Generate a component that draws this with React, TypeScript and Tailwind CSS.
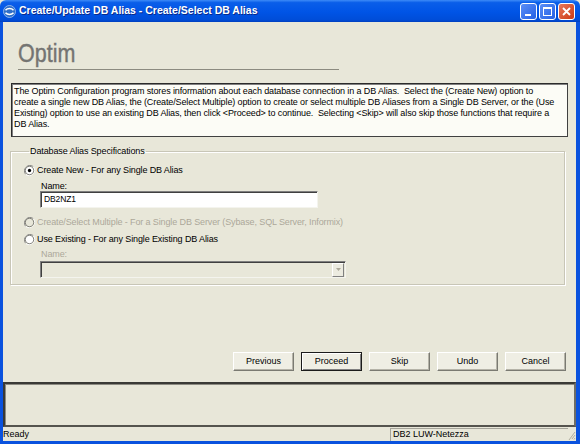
import React from "react";

const font = { fontFamily: '"Liberation Sans", Arial, sans-serif' };

function Radio({ checked, disabled }: { checked?: boolean; disabled?: boolean }) {
  return (
    <svg width="11" height="11" viewBox="0 0 12 12" className="shrink-0">
      <path d="M10.2 1.8 A6 6 0 0 0 1.8 10.2" fill="none" stroke="#808080" strokeWidth="1" />
      <path d="M1.8 10.2 A6 6 0 0 0 10.2 1.8" fill="none" stroke="#ffffff" strokeWidth="1" />
      <circle cx="6" cy="6" r="4.6" fill={disabled ? "#e8e7d9" : "#ffffff"} stroke="#5a5a55" strokeWidth="0.8" />
      {checked && <circle cx="6" cy="6" r="1.8" fill="#000" />}
    </svg>
  );
}

function Btn({ label, def }: { label: string; def?: boolean }) {
  return (
    <div
      className={
        "w-[61px] h-[19px] flex items-center justify-center text-[9px] text-black bg-[#efeee4] " +
        (def
          ? "border border-[#1b1b1b] shadow-[inset_1px_1px_0_#fff,inset_-1px_-1px_0_#808080]"
          : "border border-t-[#fff] border-l-[#fff] border-r-[#7a7a72] border-b-[#7a7a72] shadow-[inset_-1px_-1px_0_#b5b3a8]")
      }
    >
      {label}
    </div>
  );
}

export default function App() {
  return (
    <div className="w-[580px] h-[444px] flex flex-col overflow-hidden bg-[#e8e7d9]" style={font}>
      {/* Title bar */}
      <div className="h-[22px] shrink-0 flex items-center bg-[linear-gradient(#3d8bf7_0%,#0a5ee9_12%,#0054e6_55%,#004dd8_90%,#003fbf_100%)] rounded-t-[6px]">
        <svg width="13" height="13" viewBox="0 0 13 13" className="ml-[3px]">
          <circle cx="6.5" cy="6.5" r="6" fill="#2f6fc9" stroke="#a9c8f0" strokeWidth="0.8" />
          <path d="M2.5 5.2 C4.5 3 8.5 3 10.5 5.2" fill="none" stroke="#fff" strokeWidth="1.6" />
          <path d="M2.5 7.8 C4.5 10 8.5 10 10.5 7.8" fill="none" stroke="#fff" strokeWidth="1.6" />
        </svg>
        <span className="ml-[3px] text-white font-bold text-[10.5px] [text-shadow:1px_1px_0_#0a2a8a] whitespace-nowrap">
          Create/Update DB Alias - Create/Select DB Alias
        </span>
        <div className="ml-auto mr-[5px] flex gap-[2px]">
          <div className="w-[17px] h-[17px] rounded-[3px] border border-white bg-[linear-gradient(135deg,#5b8ef6,#2460e5)] flex items-end pl-[4px] pb-[3px]">
            <div className="w-[6px] h-[2px] bg-white" />
          </div>
          <div className="w-[17px] h-[17px] rounded-[3px] border border-white bg-[linear-gradient(135deg,#5b8ef6,#2460e5)] flex items-center justify-center">
            <div className="w-[9px] h-[9px] border border-white border-t-[2px]" />
          </div>
          <div className="w-[17px] h-[17px] rounded-[3px] border border-white bg-[linear-gradient(135deg,#e8785a,#cc3a15)] flex items-center justify-center">
            <svg width="9" height="9" viewBox="0 0 9 9">
              <path d="M1 1 L8 8 M8 1 L1 8" stroke="#fff" strokeWidth="1.8" />
            </svg>
          </div>
        </div>
      </div>

      {/* Body */}
      <div className="flex-1 flex flex-col border-l-[3px] border-r-[4px] border-b-[3px] border-[#0a52de]">
        {/* Header */}
        <div className="ml-[15px] w-[321px] h-[48px] shrink-0 border-b border-[#8c8b80] flex items-end pb-[3px]">
          <span className="text-[25px] leading-none text-[#747472] scale-x-[0.86] origin-left [-webkit-text-stroke:0.4px_#747472]">Optim</span>
        </div>

        {/* Description */}
        <div className="mt-[13px] mx-[8px] h-[54px] shrink-0 bg-[#fcfcf6] border border-[#2b2b2b] border-r-[#404040] border-b-[#404040] shadow-[inset_1px_1px_0_#808080] pl-[2px] pt-[2px] text-[9px] leading-[11px] tracking-[-0.12px] text-black whitespace-nowrap overflow-hidden">
          <div>The Optim Configuration program stores information about each database connection in a DB Alias.&nbsp; Select the (Create New) option to</div>
          <div>create a single new DB Alias, the (Create/Select Multiple) option to create or select multiple DB Aliases from a Single DB Server, or the (Use</div>
          <div>Existing) option to use an existing DB Alias, then click &lt;Proceed&gt; to continue.&nbsp; Selecting &lt;Skip&gt; will also skip those functions that require a</div>
          <div>DB Alias.</div>
        </div>

        {/* Group box */}
        <fieldset className="mt-[9px] ml-[7px] mr-[11px] border border-[#c8c6b7] shadow-[inset_1px_1px_0_#fff,1px_1px_0_#fff] px-[13px] pb-[6px] text-[9px] tracking-[-0.12px] text-black">
          <legend className="ml-[5px] px-[1px] leading-[11px]">Database Alias Specifications</legend>
          <div className="mt-[7px] h-[13px] flex items-center gap-[2px]">
            <Radio checked />
            <span className="leading-[13px]">Create New - For any Single DB Alias</span>
          </div>
          <div className="mt-[4px] ml-[17px] h-[10px] leading-[11px]">Name:</div>
          <div className="ml-[16px] w-[278px] h-[17px] bg-white border border-[#7f7f7f] border-r-[#f4f4ee] border-b-[#f4f4ee] shadow-[inset_1px_1px_0_#404040] flex items-center pl-[3px] text-[8.5px]">
            DB2NZ1
          </div>
          <div className="mt-[8px] h-[13px] flex items-center gap-[2px] text-[#aca899]">
            <Radio disabled />
            <span className="leading-[13px]">Create/Select Multiple - For a Single DB Server (Sybase, SQL Server, Informix)</span>
          </div>
          <div className="mt-[4px] h-[13px] flex items-center gap-[2px]">
            <Radio />
            <span className="leading-[13px]">Use Existing - For any Single Existing DB Alias</span>
          </div>
          <div className="mt-[3px] ml-[17px] h-[10px] leading-[11px] text-[#aca899]">Name:</div>
          <div className="mt-[2px] ml-[16px] w-[306px] h-[17px] bg-[#e8e7d9] border border-[#7f7f7f] border-r-[#f4f4ee] border-b-[#f4f4ee] shadow-[inset_1px_1px_0_#404040] flex justify-end items-center pr-[1px]">
            <div className="w-[12px] h-[14px] bg-[#ecebe0] border border-t-[#fff] border-l-[#fff] border-r-[#808080] border-b-[#808080] flex items-center justify-center">
              <svg width="5" height="3" viewBox="0 0 5 3">
                <path d="M0 0 H5 L2.5 3 Z" fill="#aca899" />
              </svg>
            </div>
          </div>
        </fieldset>

        <div className="flex-1" />

        {/* Buttons */}
        <div className="h-[19px] shrink-0 flex justify-end gap-[7px] mr-[10px]">
          <Btn label="Previous" />
          <Btn label="Proceed" def />
          <Btn label="Skip" />
          <Btn label="Undo" />
          <Btn label="Cancel" />
        </div>

        {/* Sunken panel */}
        <div className="mt-[11px] h-[45px] shrink-0 border-2 border-t-[#3a3a36] border-l-[#3a3a36] border-r-[#6e6d66] border-b-[#55544e] shadow-[inset_1px_1px_0_#8c8b82]" />

        {/* Status bar */}
        <div className="mt-[1px] h-[13px] shrink-0 flex items-center text-[9px] text-black">
          <span className="pl-[0px]">Ready</span>
          <div className="ml-auto h-[13px] w-[178px] border-t border-l border-[#a5a49a] pl-[2px] flex items-center">
            DB2 LUW-Netezza
          </div>
          <svg width="8" height="12" viewBox="0 0 8 12" className="self-end">
            <path d="M7 3 L1 11 M7 6 L4 10 M7 9 L6 10.5" stroke="#b0ae9f" strokeWidth="1" />
          </svg>
        </div>
      </div>
    </div>
  );
}
